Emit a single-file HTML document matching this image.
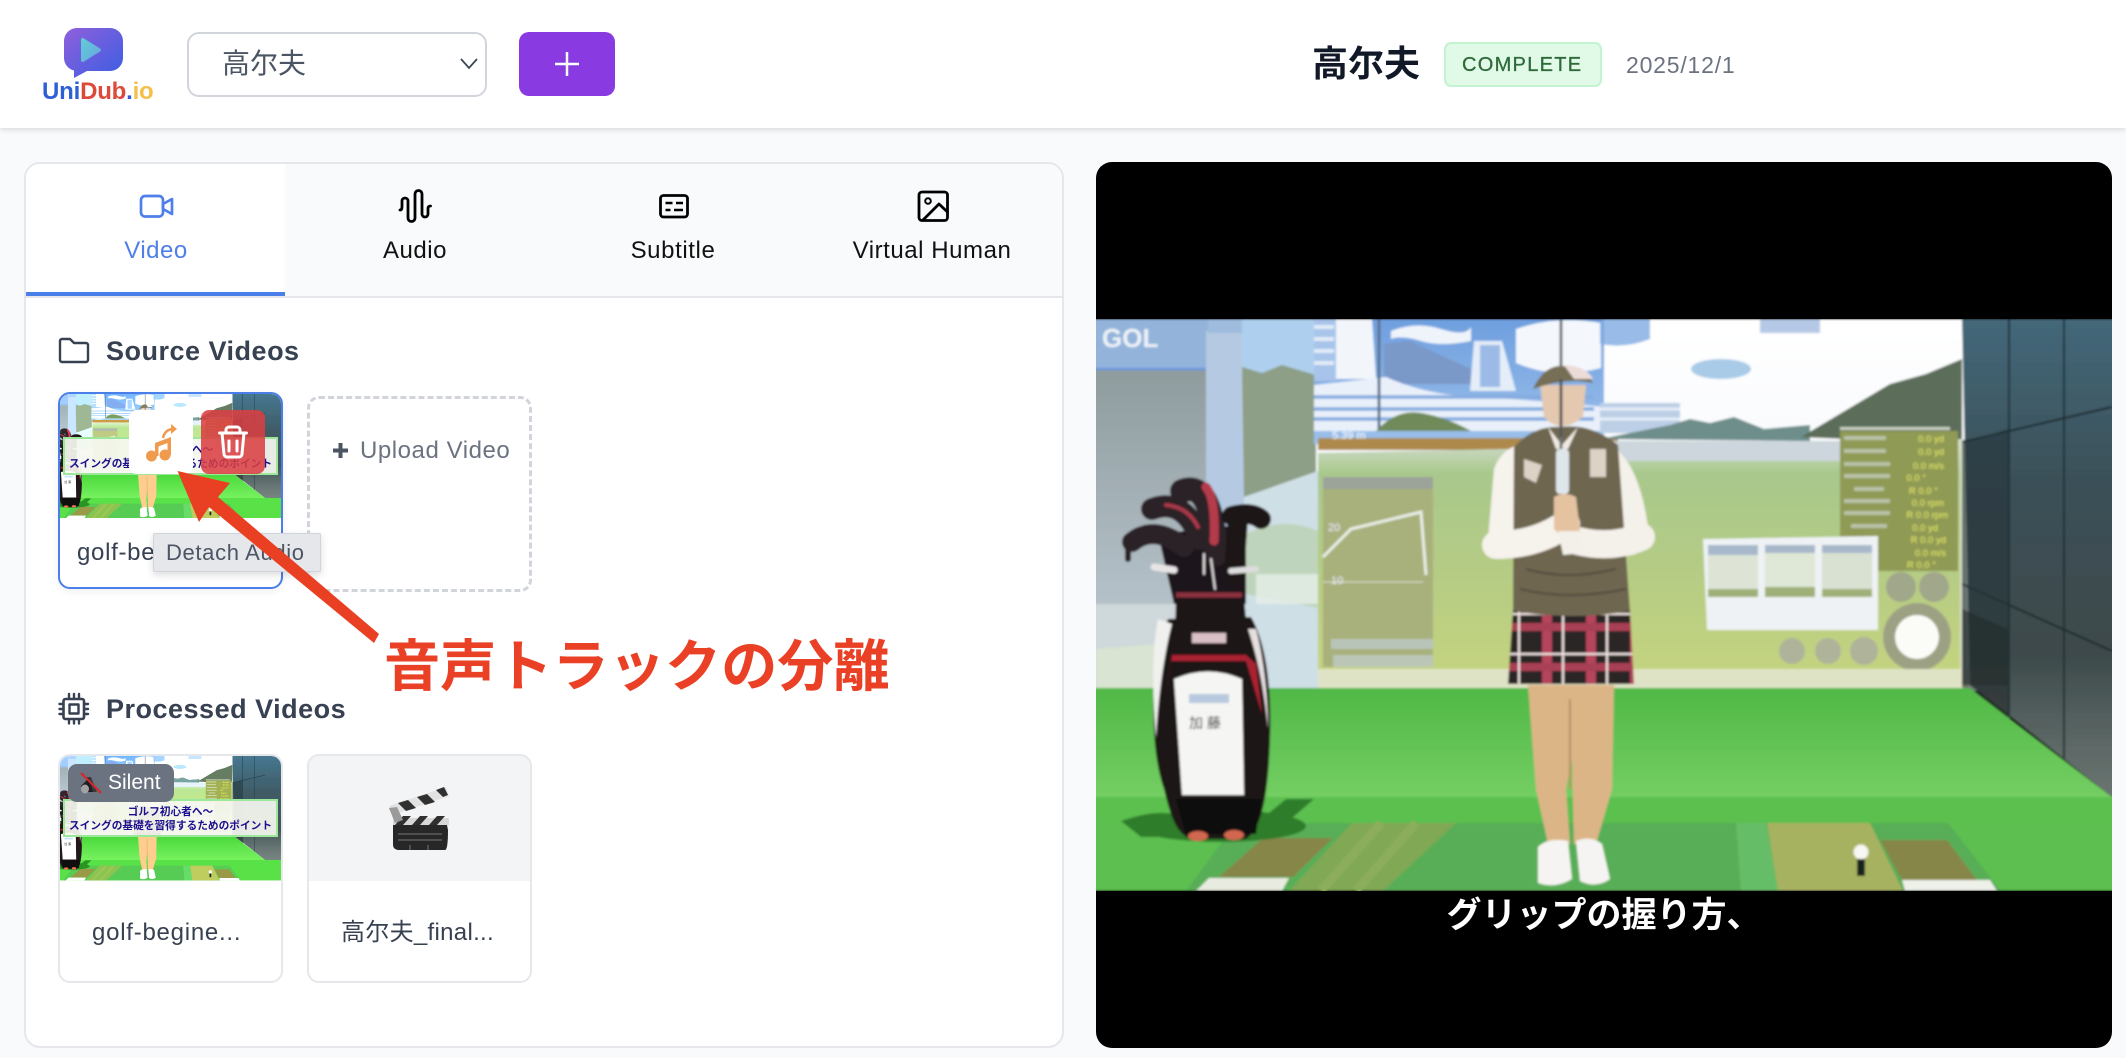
<!DOCTYPE html>
<html lang="ja"><head><meta charset="utf-8"><title>UniDub</title>
<style>
html,body{margin:0;padding:0;width:2126px;height:1058px;overflow:hidden;background:#f9fafb;font-family:"Liberation Sans","Noto Sans CJK SC",sans-serif}
.a{position:absolute;box-sizing:border-box}
.t{position:absolute;white-space:nowrap}
.thumb{position:absolute;overflow:hidden}
.thumb svg{display:block;filter:brightness(1.14) saturate(1.2)}
.banner{position:absolute;left:3px;top:43px;width:215px;height:38px;background:rgba(245,247,240,.93);border:2px solid #9be89a;box-sizing:border-box;text-align:center;font-family:"Liberation Sans","Noto Sans CJK JP",sans-serif;font-weight:700;color:#1c0e8e;font-size:10.700px;line-height:14px;padding-top:4px;white-space:nowrap}
</style></head><body>

<!-- header -->
<div class="a" style="left:0;top:0;width:2126px;height:128px;background:#fff;box-shadow:0 2px 5px rgba(0,0,0,.12)"></div>
<svg class="a" style="left:0;top:0" width="180" height="110" viewBox="0 0 180 110">
<defs>
<linearGradient id="lg1" x1="0" y1="0" x2="1" y2="1"><stop offset="0" stop-color="#8f5fdc"/><stop offset="1" stop-color="#3a5fe2"/></linearGradient>
<linearGradient id="lg2" x1="0" y1="0" x2="1" y2="1"><stop offset="0" stop-color="#5ed0d4"/><stop offset="1" stop-color="#6aa2e2"/></linearGradient>
</defs>
<path d="M77 28h33a13 13 0 0 1 13 13v17a13 13 0 0 1-13 13H87l-13 7v-7.500A13 13 0 0 1 64 58V41a13 13 0 0 1 13-13z" fill="url(#lg1)"/>
<path d="M81 40q0-3 3-1.500l16 10q2 1.500 0 3l-16 10q-3 1.500-3-1.500z" fill="url(#lg2)"/>
<text x="42" y="99" font-family="Liberation Sans" font-weight="700" font-size="24" letter-spacing="-.2"><tspan fill="#2f5fd6">Uni</tspan><tspan fill="#dc4a3a">Dub</tspan><tspan fill="#2f5fd6">.</tspan><tspan fill="#f5c04a">io</tspan></text>
</svg>
<div class="a" style="left:187px;top:32px;width:300px;height:65px;background:#fff;border:2px solid #d1d5db;border-radius:12px"></div>
<div class="t" style="left:222px;top:44px;font-size:28px;line-height:40px;color:#4b5563">高尔夫</div>
<svg class="a" style="left:459px;top:56px" width="22" height="16"><path d="M2 3l8 9 8-9" fill="none" stroke="#374151" stroke-width="1.700"/></svg>
<div class="a" style="left:519px;top:32px;width:96px;height:64px;background:#893ae0;border-radius:10px"></div>
<svg class="a" style="left:553px;top:50px" width="28" height="28"><path d="M14 2v24M2 14h24" stroke="#fff" stroke-width="2.500" fill="none"/></svg>
<div class="t" style="left:1312px;top:40px;font-size:36px;line-height:48px;font-weight:700;color:#111827">高尔夫</div>
<div class="a" style="left:1444px;top:42px;width:158px;height:45px;background:#e1f9e7;border:2px solid #c3f3d0;border-radius:7px"></div>
<div class="t" style="left:1462px;top:50px;font-size:20px;line-height:30px;letter-spacing:1.300px;color:#2f6b3a;-webkit-text-stroke:.3px #2f6b3a">COMPLETE</div>
<div class="t" style="left:1626px;top:49px;font-size:23px;line-height:32px;letter-spacing:.8px;color:#6b7280">2025/12/1</div>

<!-- left panel -->
<div class="a" style="left:24px;top:162px;width:1040px;height:886px;background:#fff;border:2px solid #e5e7eb;border-radius:16px"></div>
<div class="a" style="left:26px;top:164px;width:1036px;height:134px;background:#f9fafb;border-bottom:2px solid #e5e7eb;border-radius:14px 14px 0 0"></div>
<div class="a" style="left:26px;top:164px;width:259px;height:132px;background:#fff;border-bottom:4px solid #4a7ee8;border-radius:14px 0 0 0"></div>
<div class="t" style="left:27px;width:258px;text-align:center;top:235px;font-size:24px;line-height:32px;letter-spacing:.5px;color:#4f7fe8">Video</div>
<div class="t" style="left:285px;width:260px;text-align:center;top:235px;font-size:24px;line-height:32px;letter-spacing:.5px;color:#111">Audio</div>
<div class="t" style="left:543px;width:260px;text-align:center;top:235px;font-size:24px;line-height:32px;letter-spacing:.6px;color:#111">Subtitle</div>
<div class="t" style="left:802px;width:260px;text-align:center;top:235px;font-size:24px;line-height:32px;letter-spacing:.55px;color:#111">Virtual Human</div>

<div class="t" style="left:106px;top:332px;font-size:27px;line-height:38px;font-weight:700;letter-spacing:.5px;color:#374151">Source Videos</div>
<div class="t" style="left:106px;top:690px;font-size:27px;line-height:38px;font-weight:700;letter-spacing:.5px;color:#374151">Processed Videos</div>

<!-- right video -->
<div class="a" style="left:1096px;top:162px;width:1016px;height:886px;background:#000;border-radius:16px;overflow:hidden">
<svg class="a" style="left:0;top:157px" width="1016" height="572" viewBox="0 0 1016 572" font-family="Liberation Sans, Noto Sans CJK JP, sans-serif">
<defs>
<linearGradient id="flr" x1="0" y1="0" x2="0" y2="1"><stop offset="0" stop-color="#50b846"/><stop offset="1" stop-color="#94e27c"/></linearGradient>
<linearGradient id="flr2" x1="0" y1="0" x2="0" y2="1"><stop offset="0" stop-color="#5cc04f"/><stop offset="1" stop-color="#5cbf50"/></linearGradient>
<linearGradient id="fair" x1="0" y1="0" x2="0" y2="1"><stop offset="0" stop-color="#d3ddd2"/><stop offset=".14" stop-color="#a8c88c"/><stop offset=".55" stop-color="#b6cc84"/><stop offset="1" stop-color="#c6d57f"/></linearGradient>
<linearGradient id="wall" x1="0" y1="0" x2="0" y2="1"><stop offset="0" stop-color="#44687a"/><stop offset=".3" stop-color="#3b5058"/><stop offset=".62" stop-color="#3d4a4b"/><stop offset=".8" stop-color="#5f6a68"/><stop offset="1" stop-color="#78827e"/></linearGradient>
<linearGradient id="grayp" x1="0" y1="0" x2="0" y2="1"><stop offset="0" stop-color="#8f9c9e"/><stop offset="1" stop-color="#b6c2ca"/></linearGradient>
<linearGradient id="sky" x1="0" y1="0" x2="0" y2="1"><stop offset="0" stop-color="#ffffff"/><stop offset="1" stop-color="#eef3f8"/></linearGradient>
<linearGradient id="skyb" x1="0" y1="0" x2="0" y2="1"><stop offset="0" stop-color="#6f9fdf"/><stop offset="1" stop-color="#9cc0ea"/></linearGradient>
<pattern id="plaid" width="44" height="40" patternUnits="userSpaceOnUse"><rect width="44" height="40" fill="#2c2628"/><rect x="6" width="10" height="40" fill="#b4445c"/><rect y="24" width="44" height="8" fill="#a93f55"/><rect x="26" width="2" height="40" fill="#f3e6e4"/><rect y="14" width="44" height="2" fill="#f3e6e4"/></pattern>
<filter id="bl" x="-2%" y="-2%" width="104%" height="104%"><feGaussianBlur stdDeviation="1"/></filter>
</defs>
<g id="scene" filter="url(#bl)">
<rect x="-100" y="0" width="1000" height="372" fill="url(#sky)"/>
<!-- left console -->
<rect x="-100" y="0" width="212" height="50" fill="#93b3da"/>
<rect x="-100" y="49" width="212" height="2" fill="#5f96e4"/>
<rect x="-100" y="51" width="212" height="240" fill="url(#grayp)"/>
<rect x="110" y="12" width="38" height="270" fill="#b5cae2"/>
<rect x="112" y="0" width="36" height="14" fill="#9fbbde"/>
<rect x="-100" y="285" width="340" height="85" fill="#cfd8da"/>
<path d="M0 330L60 325 180 340 240 360V372H0z" fill="#d9e4d2"/>
<!-- forest and path -->
<rect x="146" y="0" width="74" height="60" fill="#aed0ee"/>
<path d="M146 48l20 6 20-8 34 10V155L148 178z" fill="#8d9f86"/>
<path d="M148 178L222 152V372H150z" fill="#cfdfe6"/>
<path d="M150 215Q190 195 228 215V290L150 275z" fill="#b9d0ad" opacity=".75"/>
<path d="M160 255h70v30h-70z" fill="#e6eee8" opacity=".8"/>
<!-- sky mid -->
<rect x="218" y="0" width="290" height="125" fill="url(#skyb)"/>
<path d="M288 25l25-3 40 18 22 10v15h-87z" fill="#7a98c8"/>
<path d="M295 12q25-10 50-2t30-2v14q-30 6-50 0t-30-2z" fill="#eff4fb"/>
<path d="M420 10q40-14 85-6v45q-45 12-85-5z" fill="#f4f8fc"/>
<path d="M238 0h38l4 60h-42z" fill="#f2f6fb"/>
<path d="M218 0h22v62h-22z" fill="#a8c4ea"/>
<path d="M218 8h20M218 20h20M218 32h20M218 44h20" stroke="#e2ecf8" stroke-width="4"/>
<path d="M378 22h28l14 50h-46z" fill="#e4edf8"/>
<path d="M384 26h20v42h-20z" fill="#9bbbe6"/>
<path d="M218 66L290 58q40 18 90 20t130 10V112H218z" fill="#e9f0fa"/>
<path d="M218 78h280M218 90h280M218 100h280" stroke="#86ace0" stroke-width="3.500"/>
<path d="M283 0v110" stroke="#5c7392" stroke-width="3"/>
<path d="M280 112q20-22 45-18t50 18z" fill="#6f8a5a"/>
<rect x="222" y="119" width="300" height="12" fill="#ad8a4c"/>
<text x="236" y="120" font-size="11" fill="#fff">5.39 m</text>
<!-- right sky -->
<path d="M504 0h50v20q-25 10-50 5z" fill="#7eaae2" opacity=".8"/>
<ellipse cx="625" cy="50" rx="30" ry="10" fill="#a9cbe8"/>
<path d="M664 0h60v14h-60z" fill="#b5c9e6"/>
<path d="M504 84h80v30h-80z" fill="#bccfe6"/>
<path d="M504 90h80M504 100h80" stroke="#e6eef8" stroke-width="3"/>
<path d="M504 120l70-14 20-6 20 4 24-6 30 12 46-4V122z" fill="#6e8e8c"/>
<path d="M705 118L794 65 830 55 866 40V125z" fill="#5b6d5a"/>
<!-- fairway -->
<path d="M222 134L870 120V370H222z" fill="url(#fair)"/>
<rect x="504" y="122" width="244" height="20" fill="#ccd6dc"/>
<!-- chart -->
<rect x="227" y="158" width="110" height="190" fill="#a8b07c"/>
<rect x="227" y="158" width="110" height="12" fill="#9ca49a"/>
<rect x="235" y="320" width="102" height="10" fill="#b9c4b9"/>
<rect x="237" y="336" width="100" height="12" fill="#bcc6b6"/>
<path d="M227 238L255 210 325 193 330 256" fill="none" stroke="#e8efe6" stroke-width="3"/>
<path d="M227 263h100" stroke="#dde4d0" stroke-width="1"/>
<text x="232" y="212" font-size="11" fill="#eef">20</text><text x="235" y="265" font-size="11" fill="#eef">10</text>
<!-- HUD -->
<rect x="744" y="112" width="118" height="140" fill="#8f9a55"/>
<rect x="744" y="108" width="110" height="3" fill="#c8cfc0"/>
<g font-size="9.500" fill="#e9ec6a" text-anchor="end">
<text x="848" y="123">0.0 yd</text><text x="848" y="136">0.0 yd</text><text x="848" y="150">0.0 m/s</text><text x="830" y="162">0.0 °</text><text x="842" y="175">R 0.0 °</text><text x="848" y="187">0.0 rpm</text><text x="852" y="199">R 0.0 rpm</text><text x="842" y="212">0.0 yd</text><text x="850" y="224">R 0.0 yd</text><text x="850" y="237">0.0 m/s</text><text x="840" y="249">R 0.0 °</text>
</g>
<path d="M748 119h42M748 132h42M748 145h46M748 157h46M758 170h30M748 182h46M748 194h46M755 207h36" stroke="#dce6ec" stroke-width="4" opacity=".55"/>
<circle cx="805" cy="268" r="15" fill="#a0a78a"/><circle cx="838" cy="268" r="15" fill="#a0a78a"/>
<rect x="864" y="120" width="6" height="250" fill="#d9dfc8"/>
<!-- photo card -->
<path d="M607 220L782 217V311H611z" fill="#eef2f4"/>
<rect x="612" y="226" width="50" height="52" fill="#dde4d6"/><rect x="669" y="226" width="50" height="52" fill="#dfe7d6"/><rect x="726" y="226" width="50" height="52" fill="#d9e1d2"/>
<path d="M612 226h50v10h-50zM669 226h50v8h-50zM726 226h50v8h-50z" fill="#a8b8cb"/>
<path d="M612 270h50v8h-50zM726 270h50v8h-50zM669 268h50v10h-50z" fill="#9fb078"/>
<!-- bottom ui -->
<circle cx="696" cy="332" r="13" fill="#aeb39a"/><circle cx="732" cy="332" r="13" fill="#aeb39a"/><circle cx="768" cy="332" r="14" fill="#aeb39a"/>
<circle cx="821" cy="318" r="34" fill="#9da183"/><circle cx="821" cy="318" r="22" fill="#fbfbf8"/>
<rect x="222" y="350" width="650" height="20" fill="#dfe3c6"/>
<!-- wall -->
<path d="M866 0H1100V540L1016 478 874 366z" fill="url(#wall)"/>
<path d="M913 0V400M968 0V440" stroke="#1d3338" stroke-width="2"/>
<path d="M866 123L1016 88M866 265L1016 332" stroke="#1b2b2e" stroke-width="2"/>
<path d="M866 124V366H912V110z" fill="#27363a" opacity=".65"/>
<path d="M866 290V368L912 398V310z" fill="#25282a" opacity=".6"/>
<!-- floor -->
<path d="M-100 369H874L1016 478 1100 540V572H-100z" fill="url(#flr)"/>
<path d="M-100 478H1100V572H-100z" fill="url(#flr2)"/>
<path d="M140 504H852L905 572H90z" fill="#58ae57"/>
<path d="M640 504H670L682 572H645z" fill="#66bd67"/>
<path d="M256 504H360L287 572H193z" fill="#80a854"/>
<path d="M285 504l-60 68M320 504l-60 68" stroke="#8cae5c" stroke-width="9"/>
<path d="M167 519H237L197 558H123z" fill="#86864a"/>
<path d="M113 559H193L186 572H100z" fill="#e8ebe0"/>
<path d="M671 504H774L807 572H682z" fill="#a7b261"/>
<path d="M784 521H851L881 561H806z" fill="#86864a"/>
<path d="M806 561H894L901 572H809z" fill="#eef0ea"/>
<circle cx="765" cy="533" r="7.500" fill="#f7f7f3"/><rect x="761" y="540" width="8" height="17" fill="#18211c"/>
<!-- bag -->
<ellipse cx="125" cy="507" rx="85" ry="16" fill="#2f7d2c"/>
<path d="M190 480h28l-30 26h-30zM25 502q40-14 60-4v20H45z" fill="#2f7d2c"/>
<path d="M62 215L150 205 150 285H78z" fill="#1d181a"/>
<g fill="none" stroke-linecap="round">
<path d="M36 223Q58 205 88 228" stroke="#2a2226" stroke-width="20"/>
<path d="M32 226v14" stroke="#2a2226" stroke-width="6"/>
<path d="M56 190Q88 178 104 220" stroke="#2b2225" stroke-width="22"/>
<path d="M70 186Q92 188 102 208" stroke="#a83748" stroke-width="4"/>
<path d="M86 172Q116 160 120 235" stroke="#2c2225" stroke-width="24"/>
<path d="M110 168Q120 180 118 222" stroke="#b43a4c" stroke-width="9"/>
<path d="M136 197Q155 192 165 200" stroke="#1c1719" stroke-width="20"/>
<path d="M142 200L138 255" stroke="#1c1719" stroke-width="20"/>
<path d="M58 248L78 251" stroke="#e8e4e6" stroke-width="7"/>
<path d="M135 252L160 250" stroke="#ddd" stroke-width="6"/>
<path d="M108 235v20M115 240l4 30" stroke="#e2dfe0" stroke-width="2"/>
</g>
<path d="M80 278H148L150 300 152 340H78z" fill="#1c1517"/>
<path d="M80 276H146" stroke="#8a3040" stroke-width="5"/>
<path d="M72 300C55 340 52 425 68 470 74 495 80 515 95 520H150C165 510 172 480 174 420 176 360 168 320 155 298z" fill="#1a1214"/>
<path d="M62 300C56 330 56 370 60 420 62 380 68 335 76 305z" fill="#f0f0ee"/>
<path d="M160 310C168 340 172 380 172 410 168 370 162 340 152 310z" fill="#e6dfe0"/>
<path d="M75 342H150L166 395 160 345 150 336H76L68 395z" fill="#a82230"/>
<rect x="96" y="314" width="34" height="10" fill="#d9c0c6"/>
<path d="M78 360Q112 345 146 360L148 476H86z" fill="#f5f5f4"/>
<rect x="93" y="375" width="40" height="9" fill="#b7c9de"/>
<text x="93" y="409" font-size="14" fill="#222">加 藤</text>
<path d="M80 480H165L160 515H90z" fill="#0c0a0b"/>
<ellipse cx="102" cy="517" rx="10" ry="5" fill="#d2664f"/><ellipse cx="138" cy="516" rx="10" ry="5" fill="#d2664f"/>
<!-- person -->
<path d="M432 366L518 366 516 470 500 525H478L476 440 470 470 474 525H452L440 470z" fill="#dcb587"/>
<path d="M474 380V470" stroke="#b68f64" stroke-width="2"/>
<path d="M442 528Q452 518 472 522L476 560Q460 570 442 564zM480 522Q495 516 506 525L514 560Q500 570 484 562z" fill="#f6f4f2"/>
<path d="M417 290H534L538 365H412z" fill="url(#plaid)"/>
<path d="M398 150Q405 130 425 125L440 235 405 240Q390 235 392 220z" fill="#f6f2ec"/>
<path d="M520 130Q545 150 553 215 552 235 530 237H505L515 180z" fill="#f4f0ea"/>
<path d="M418 128Q438 106 465 108 495 104 522 126L534 292Q478 302 417 292z" fill="#6e6650"/>
<path d="M430 250q40 12 90 0M424 270q50 12 106 0" fill="none" stroke="#585140" stroke-width="2.500"/>
<path d="M452 108L466 126 482 108 472 130H460z" fill="#efe9e2"/>
<path d="M428 140l18 6-6 18-12-6zM494 130h16v28h-16z" fill="#dcd2c6"/>
<path d="M400 226Q440 226 470 205" fill="none" stroke="#f6f2ec" stroke-width="28" stroke-linecap="round"/>
<path d="M545 218Q515 230 482 222" fill="none" stroke="#f4f0ea" stroke-width="28" stroke-linecap="round"/>
<rect x="460" y="130" width="13" height="45" rx="4" fill="#dfe6ea"/>
<path d="M465 0V130" stroke="#6b6f72" stroke-width="3"/>
<path d="M458 178Q468 172 480 178L484 212 468 220 458 210z" fill="#e5c2a0"/>
<path d="M462 212h22l3 22-20 2z" fill="#f3efe9"/>
<path d="M444 66L490 66 487 98Q465 116 448 98z" fill="#e4c8b0"/>
<path d="M437 70Q448 46 466 47 490 48 497 64 470 58 437 70z" fill="#766e54"/>
<path d="M468 46Q490 47 497 60L478 60z" fill="#ecdcd8"/>
<path d="M465 60v58" stroke="#55585a" stroke-width="3"/>
<text x="6" y="28" font-size="26" font-weight="700" fill="#eef3f8">GOL</text>
</g>
</svg>
<div class="t" style="left:0;width:1016px;text-align:center;top:731px;font-family:'Liberation Sans','Noto Sans CJK JP',sans-serif;font-size:35px;line-height:46px;font-weight:700;color:#fff">グリップの握り方、</div>
</div>

<!-- source card -->
<div class="a" style="left:58px;top:392px;width:225px;height:197px;background:#fff;border:2px solid #4a7ee8;border-radius:12px;box-shadow:0 3px 8px rgba(0,0,0,.06)"></div>
<div class="thumb" style="left:60px;top:394px;width:221px;height:124px;border-radius:10px 10px 0 0">
<svg width="221" height="124" viewBox="0 0 221 124"><g transform="translate(-16 0) scale(.2175)"><use href="#scene"/></g></svg>
<div class="banner">ゴルフ初心者へ～<br>スイングの基礎を習得するためのポイント</div>
</div>
<div class="t" style="left:77px;top:537px;font-size:24px;line-height:32px;letter-spacing:.7px;color:#374151">golf-begine...</div>
<div class="a" style="left:129px;top:410px;width:64px;height:64px;background:#fff;border-radius:8px"></div>
<div class="a" style="left:201px;top:410px;width:64px;height:64px;background:rgba(218,62,66,.87);border-radius:8px"></div>

<!-- upload -->
<div class="a" style="left:307px;top:396px;width:225px;height:196px;background:#fff;border:3px dashed #d1d5db;border-radius:12px"></div>
<div class="t" style="left:360px;top:435px;font-size:24px;line-height:32px;letter-spacing:.55px;color:#6b7280">Upload Video</div>

<!-- processed cards -->
<div class="a" style="left:58px;top:754px;width:225px;height:229px;background:#fff;border:2px solid #e5e7eb;border-radius:12px"></div>
<div class="thumb" style="left:60px;top:756px;width:221px;height:125px;border-radius:10px 10px 0 0">
<svg width="221" height="125" viewBox="0 0 221 125"><g transform="translate(-16 0) scale(.2175)"><use href="#scene"/></g></svg>
<div class="banner">ゴルフ初心者へ～<br>スイングの基礎を習得するためのポイント</div>
</div>
<div class="a" style="left:68px;top:764px;width:106px;height:38px;background:#6b7280;border-radius:9px"></div>
<div class="t" style="left:108px;top:767px;font-size:21px;line-height:32px;color:#fff">Silent</div>
<div class="t" style="left:92px;top:917px;font-size:24px;line-height:32px;letter-spacing:.75px;color:#374151">golf-begine...</div>

<div class="a" style="left:307px;top:754px;width:225px;height:229px;background:#fff;border:2px solid #e5e7eb;border-radius:12px"></div>
<div class="a" style="left:309px;top:756px;width:221px;height:125px;background:#f3f4f6;border-radius:10px 10px 0 0"></div>
<div class="t" style="left:341px;top:917px;font-size:24px;line-height:32px;letter-spacing:.3px;color:#374151">高尔夫_final...</div>

<!-- icons -->
<svg class="a" style="left:0;top:0" width="2126" height="1058" viewBox="0 0 2126 1058">
<g fill="none" stroke-linecap="round" stroke-linejoin="round">
<rect x="141" y="196" width="22" height="20.500" rx="4" stroke="#4f7fe8" stroke-width="2.700"/>
<path d="M163 204l9-5v15l-9-5z" stroke="#4f7fe8" stroke-width="2.700"/>
<path d="M400 210c2 0 2-2 2-4v-5a3 3 0 0 1 6 0v17a3.500 3.500 0 0 0 7 0v-24a3.500 3.500 0 0 1 7 0v20a3 3 0 0 0 6 0v-6c0-1 1-2 2.500-2" stroke="#000" stroke-width="2.800"/>
<rect x="660.500" y="195.500" width="27" height="21.500" rx="3" stroke="#000" stroke-width="2.800"/>
<path d="M665.500 203h7M676 203h7M665.500 210h5M674 210h9" stroke="#000" stroke-width="2.400" stroke-linecap="butt"/>
<rect x="919" y="192" width="28.500" height="28.500" rx="3" stroke="#000" stroke-width="2.800"/>
<circle cx="928" cy="201" r="2.800" stroke="#000" stroke-width="2"/>
<path d="M923 220l16-16 8.500 8" stroke="#000" stroke-width="2.800"/>
<path d="M60 341a2 2 0 0 1 2-2h8l4 4h12a2 2 0 0 1 2 2v15a2 2 0 0 1-2 2H62a2 2 0 0 1-2-2z" stroke="#374151" stroke-width="2.400"/>
<rect x="63.500" y="699" width="20.500" height="20" rx="2" stroke="#374151" stroke-width="2.600"/>
<rect x="69.500" y="704.500" width="9" height="9" stroke="#374151" stroke-width="2.400"/>
<path d="M69 694v4M74 694v4M79 694v4M69 720v3.500M74 720v3.500M79 720v3.500M59.500 704h3M59.500 709h3M59.500 714h3M85 704h3M85 709h3M85 714h3" stroke="#374151" stroke-width="2.400"/>
<!-- upload plus -->
<path d="M340.500 443v15M333 450.500h15" stroke="#4b5563" stroke-width="4" stroke-linecap="butt"/>
<!-- trash -->
<path d="M219.500 433h27M226 433v-3a3 3 0 0 1 3-3h8a3 3 0 0 1 3 3v3M222 433l2 21a3 3 0 0 0 3 3h12a3 3 0 0 0 3-3l2-21M229 441v10M237 441v10" stroke="#fff" stroke-width="3"/>
</g>
<!-- music -->
<g fill="#f09a4e">
<circle cx="151.500" cy="456" r="5.500"/><circle cx="165" cy="455" r="5.500"/>
<path d="M155 456V443l16-6v18h-3.500V443l-9 3.500V456z"/>
</g>
<path d="M163 438q2-9 11-9" fill="none" stroke="#f09a4e" stroke-width="2.500"/>
<path d="M171 424l6 5-6 5z" fill="#f09a4e"/>
<!-- speaker -->
<path d="M86 777h5l6 15h-7z" fill="#3b3b3d"/><path d="M81 786l8-8 4 14h-8z" fill="#1f1f21"/><ellipse cx="85" cy="789" rx="4" ry="4.500" fill="#a3a3a3"/>
<path d="M81 773l20 20" stroke="#d8262a" stroke-width="2"/>
<!-- clapper -->
<path d="M393 818h54q2 0 2 2v5h-56z" fill="#d8d8d8"/>
<path d="M393 825h54l1 5q0 20-3 20H398q-5-1-5-5z" fill="#272727"/>
<path d="M403 816l-8 9h8l8-9zM420 816l-8 9h8l8-9zM437 816l-8 9h8l8-9z" fill="#303030"/>
<path d="M398 834h44M398 840h44M410 845v5M428 845v5" stroke="#777" stroke-width="1"/>
<path d="M389 806L446 787l3 9-56 19z" fill="#e2e2e2"/>
<path d="M398 803l10-3 8 8-10 3zM417 797l10-3 8 8-10 3zM436 790l8-3 4 8-5 2z" fill="#303030"/>
<path d="M389 808l8-1 6 13-8 3z" fill="#9a9a9a"/>
</svg>

<!-- tooltip -->
<div class="a" style="left:153px;top:533px;width:168px;height:39px;background:#e5e7eb;border:1px solid #d1d5db;border-radius:2px;box-shadow:0 3px 8px rgba(0,0,0,.14)"></div>
<div class="t" style="left:166px;top:537px;font-size:22px;line-height:32px;letter-spacing:.65px;color:#4b5563">Detach Audio</div>

<!-- annotation -->
<svg class="a" style="left:0;top:0" width="2126" height="1058" viewBox="0 0 2126 1058">
<path d="M177.500 471L230 483 218 497 379 634 374 643 209 507 199 522z" fill="#e93f22"/>
</svg>
<div class="t" style="left:384px;top:627px;font-family:'Liberation Sans','Noto Sans CJK JP',sans-serif;font-size:56.200px;line-height:80px;font-weight:700;color:#ea4025">音声トラックの分離</div>
</body></html>
